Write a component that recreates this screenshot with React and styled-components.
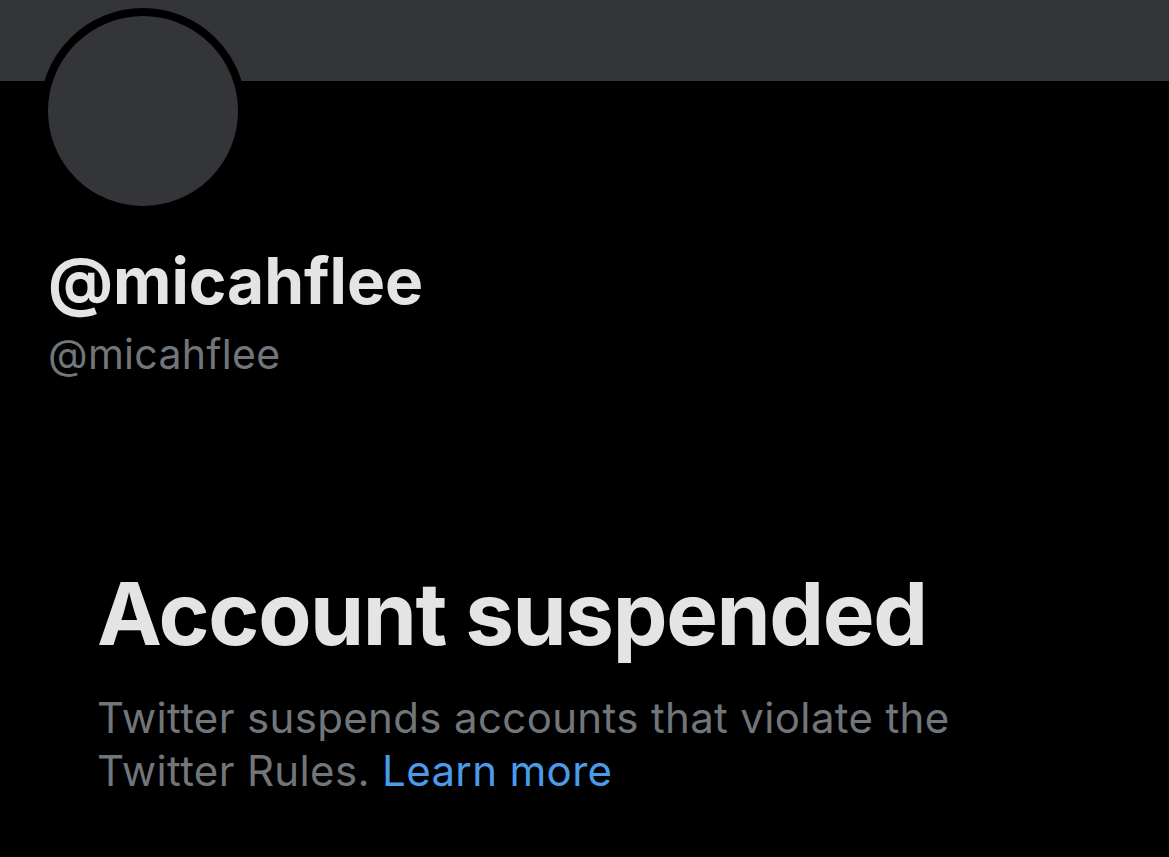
import styled, { createGlobalStyle } from "styled-components";

const GlobalStyle = createGlobalStyle`
  html, body {
    margin: 0;
    padding: 0;
    background: #000;
  }
  body {
    font-family: Inter, "Noto Sans", "Liberation Sans", sans-serif;
    -webkit-font-smoothing: antialiased;
  }
`;

const Page = styled.div`
  width: 1169px;
  height: 857px;
  background: #000;
  overflow: hidden;
`;

const Banner = styled.div`
  height: 81px;
  background: #333539;
`;

const Profile = styled.div`
  padding: 0 48px;
`;

const Avatar = styled.div`
  width: 190px;
  height: 190px;
  margin-top: -73px;
  margin-left: -8px;
  border: 8px solid #000;
  border-radius: 50%;
  background: #333539;
`;

const DisplayName = styled.h1`
  margin: 31px 0 0;
  font-size: 64px;
  font-weight: 700;
  line-height: 72px;
  color: #e4e4e4;
`;

const Handle = styled.div`
  margin-top: 13px;
  font-size: 41px;
  line-height: 48px;
  color: #71767b;
  letter-spacing: 0.3px;
`;

const Notice = styled.section`
  padding: 186px 97px 0;
`;

const Title = styled.h2`
  margin: 0;
  font-size: 87px;
  font-weight: 700;
  line-height: 100px;
  color: #e4e4e4;
  letter-spacing: -1.4px;
`;

const Body = styled.p`
  margin: 27px 0 0;
  font-size: 42px;
  line-height: 53px;
  color: #71767b;
  letter-spacing: 0.35px;
`;

const Link = styled.a`
  color: #4a9be9;
  text-decoration: none;
`;

export default function App() {
  return (
    <Page>
      <GlobalStyle />
      <Banner />
      <Profile>
        <Avatar />
        <DisplayName>@micahflee</DisplayName>
        <Handle>@micahflee</Handle>
      </Profile>
      <Notice>
        <Title>Account suspended</Title>
        <Body>
          Twitter suspends accounts that violate the
          <br />
          Twitter Rules. <Link href="#">Learn more</Link>
        </Body>
      </Notice>
    </Page>
  );
}
